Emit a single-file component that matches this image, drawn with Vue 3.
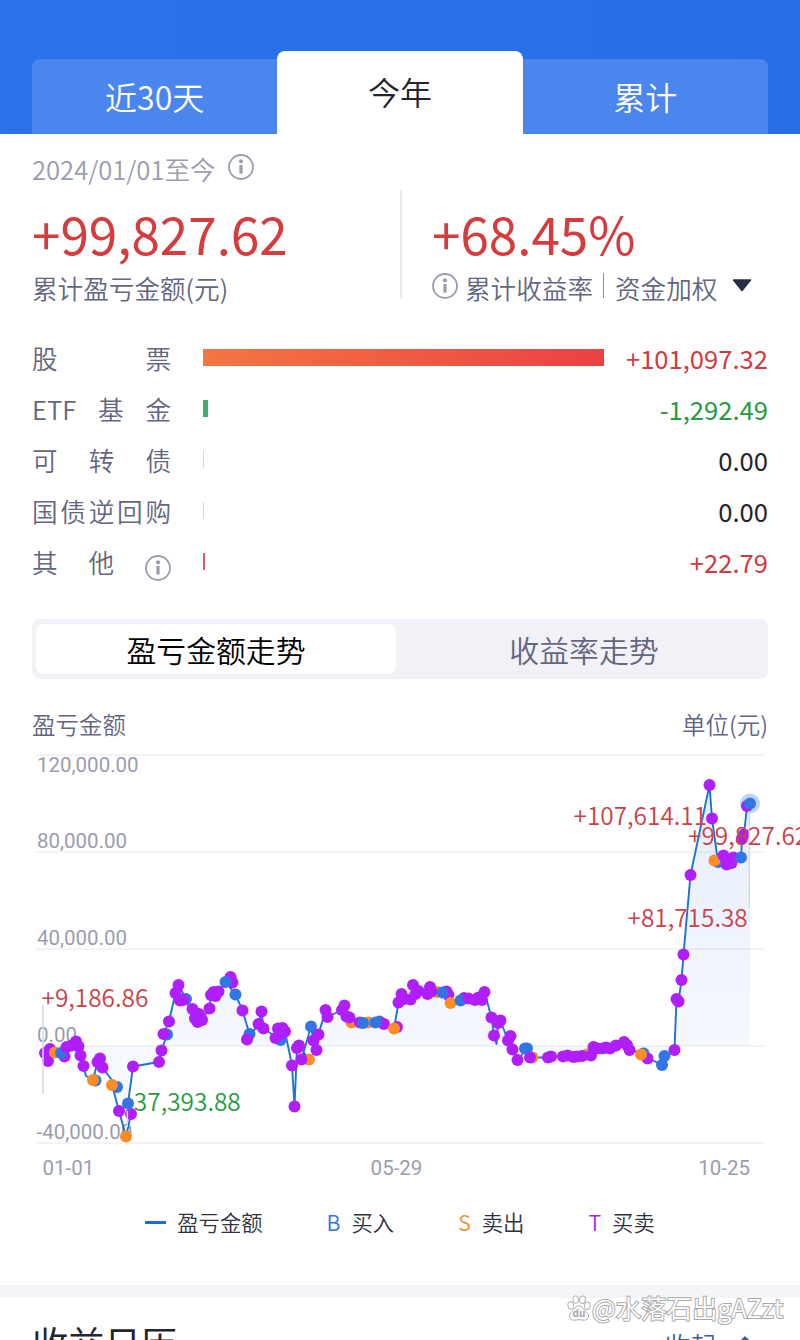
<template>
  <div class="page">
    <header class="header">
      <nav class="tabs">
        <div v-for="tab in tabs" :key="tab" class="tab" :class="{ active: tab === activeTab }">{{ tab }}</div>
      </nav>
    </header>

    <section class="summary">
      <div class="summary-col">
        <div class="date">
          <span>2024/01/01至今</span>
          <svg class="info" viewBox="0 0 26 26">
            <circle cx="13" cy="13" r="12" />
            <circle class="fill" cx="13" cy="7.3" r="2.1" />
            <path d="M13 11v8.6" />
          </svg>
        </div>
        <div class="amount">+99,827.62</div>
        <div class="caption">累计盈亏金额(元)</div>
      </div>
      <div class="divider"></div>
      <div class="summary-col right">
        <div class="amount">+68.45%</div>
        <div class="caption">
          <svg class="info" viewBox="0 0 26 26">
            <circle cx="13" cy="13" r="12" />
            <circle class="fill" cx="13" cy="7.3" r="2.1" />
            <path d="M13 11v8.6" />
          </svg>
          <span class="rate">累计收益率</span>
          <i class="sep"></i>
          <span>资金加权</span>
          <svg class="caret" viewBox="0 0 20 13"><path d="M1.5 1h17L10 11.5z" /></svg>
        </div>
      </div>
    </section>

    <section class="rows">
      <div v-for="row in rows" :key="row.value + row.label[0]" class="row">
        <div class="row-label">
          <span v-for="word in row.label" :key="word">{{ word }}</span>
          <svg v-if="row.info" class="info" viewBox="0 0 26 26">
            <circle cx="13" cy="13" r="12" />
            <circle class="fill" cx="13" cy="7.3" r="2.1" />
            <path d="M13 11v8.6" />
          </svg>
        </div>
        <div class="track">
          <div class="bar" :class="row.kind" :style="{ width: row.width + 'px' }"></div>
        </div>
        <div class="row-value" :class="row.color">{{ row.value }}</div>
      </div>
    </section>

    <div class="segment">
      <div class="segment-item on">盈亏金额走势</div>
      <div class="segment-item">收益率走势</div>
    </div>

    <div class="chart-head">
      <span>盈亏金额</span>
      <span>单位(元)</span>
    </div>

    <svg class="chart" :viewBox="`0 ${top} ${width} ${height}`">
      <defs>
        <linearGradient id="area" gradientUnits="userSpaceOnUse" x1="0" y1="785" x2="0" y2="1140">
          <stop offset="0" stop-color="#2b72e8" stop-opacity="0.12" />
          <stop offset="1" stop-color="#2b72e8" stop-opacity="0.02" />
        </linearGradient>
      </defs>

      <line v-for="t in ticks" :key="t.label" class="grid" x1="36" :y1="t.y" x2="765" :y2="t.y" />
      <polygon :points="areaPath" fill="url(#area)" />
      <text v-for="t in ticks" :key="`y-${t.label}`" class="axis" :x="t.x" :y="t.base">{{ t.label }}</text>

      <text class="mark down" x="125.5" y="1110.5">-37,393.88</text>
      <polyline class="line" :points="linePath" />

      <circle class="halo" cx="750" cy="803.5" r="10" />
      <circle v-for="(p, i) in dots" :key="i" :class="p[2]" :cx="p[0]" :cy="p[1]" r="6" />

      <line class="pin" x1="43" y1="1005" x2="43" y2="1094" />
      <line class="pin" x1="127.3" y1="1111" x2="127.3" y2="1127" />
      <line class="pin" x1="749.3" y1="811" x2="749.3" y2="908" />

      <text class="mark up" x="41.5" y="1006.5">+9,186.86</text>
      <text class="mark up" x="573.5" y="824.5">+107,614.11</text>
      <text class="mark up" x="688" y="844.5">+99,827.62</text>
      <text class="mark up" x="627.5" y="926.5">+81,715.38</text>

      <text class="axis" x="42.5" y="1174.5">01-01</text>
      <text class="axis" x="396.5" y="1174.5" text-anchor="middle">05-29</text>
      <text class="axis" x="750" y="1174.5" text-anchor="end">10-25</text>
    </svg>

    <div class="legend">
      <div class="legend-item"><i class="dash"></i>盈亏金额</div>
      <div class="legend-item"><b class="buy">B</b>买入</div>
      <div class="legend-item"><b class="sell">S</b>卖出</div>
      <div class="legend-item"><b class="both">T</b>买卖</div>
    </div>

    <div class="gap"></div>

    <section class="calendar">
      <h2>收益日历</h2>
      <div class="fold">
        收起
        <svg viewBox="0 0 20 12"><path d="M4 9l6-6 6 6" /></svg>
      </div>
    </section>

    <div class="watermark">
      <svg viewBox="0 0 24 26">
        <ellipse cx="3.8" cy="10.5" rx="2.8" ry="3.7" transform="rotate(-14 3.8 10.5)" />
        <ellipse cx="8.8" cy="4.6" rx="2.9" ry="3.8" />
        <ellipse cx="15.5" cy="4.7" rx="2.9" ry="3.8" transform="rotate(10 15.5 4.7)" />
        <ellipse cx="20.3" cy="10.8" rx="2.8" ry="3.7" transform="rotate(12 20.3 10.8)" />
        <path d="M12 10.6c-2.5 0-3.7 2.5-5.3 4.3-1.8 2-4.2 3.2-4.2 6.1 0 2.7 1.9 4.2 4.4 4.2 1.9 0 3.3-.5 5.1-.5s3.2.5 5.1.5c2.5 0 4.4-1.5 4.4-4.2 0-2.9-2.4-4.1-4.2-6.1-1.6-1.8-2.8-4.3-5.3-4.3z" />
        <text x="12" y="22.3" text-anchor="middle">du</text>
      </svg>
      <span>@水落石出gAZzt</span>
    </div>
  </div>
</template>

<script setup>
import { computed } from 'vue';

const tabs = ['近30天', '今年', '累计'];
const activeTab = '今年';

const rows = [
  { label: ['股', '票'], value: '+101,097.32', color: 'up', kind: 'profit', width: 401 },
  { label: ['ETF', '基', '金'], value: '-1,292.49', color: 'down', kind: 'loss', width: 5 },
  { label: ['可', '转', '债'], value: '0.00', color: '', kind: 'none', width: 1 },
  { label: ['国', '债', '逆', '回', '购'], value: '0.00', color: '', kind: 'none', width: 1 },
  { label: ['其', '他'], value: '+22.79', color: 'up', kind: 'tiny', width: 1.5, info: true }
];

const width = 800;
const height = 440;
const top = 750;
const zeroY = 1046;

const ticks = [
  { label: '120,000.00', y: 755, base: 771.5, x: 37 },
  { label: '80,000.00', y: 852, base: 847.5, x: 37 },
  { label: '40,000.00', y: 949, base: 945, x: 37 },
  { label: '0.00', y: 1046, base: 1042, x: 37 },
  { label: '-40,000.00', y: 1143, base: 1139, x: 36.5 }
];

// B = 买入, S = 卖出, T = 买卖, '' = 当天无交易
const points = [
  [45, 1053, 'T'], [48, 1061, 'T'], [50, 1049, 'T'], [55, 1052.5, 'S'], [64.5, 1056.5, 'T'], [61, 1053, 'B'],
  [66.5, 1047, 'T'], [71.5, 1045.5, 'T'], [76, 1041.5, 'T'], [78.5, 1046.5, 'T'], [80.5, 1055.5, 'T'],
  [83.5, 1066, 'T'], [86, 1076, ''], [95.5, 1080.5, 'B'], [93, 1080, 'S'], [97.5, 1062, 'T'], [100, 1058.5, 'T'],
  [102.5, 1067.5, 'T'], [117, 1087, 'B'], [112, 1085, 'S'], [119, 1111, 'T'], [126, 1136.5, 'S'],
  [131, 1114, 'T'], [128, 1103.5, 'B'], [133, 1066.5, 'T'], [159, 1062, 'T'], [161.5, 1050.5, 'T'],
  [167, 1034.5, 'B'], [163.5, 1034, 'T'], [169, 1021.5, 'T'], [175.5, 993, 'T'], [178.5, 985, 'T'],
  [186, 999, 'B'], [180, 1000.5, 'T'], [183, 1000, 'T'], [192.5, 1009, 'T'], [195, 1018.5, 'T'],
  [197.5, 1022, 'T'], [199, 1014, 'T'], [202, 1020, 'T'], [209.5, 1008.5, 'T'], [211, 995, 'T'],
  [213.5, 992, 'T'], [215.5, 996, 'T'], [218.5, 991.5, 'T'], [230.5, 977, 'T'], [232.5, 982.5, 'T'],
  [225.5, 982, 'B'], [235.5, 994.5, 'B'], [242.5, 1010.5, 'T'], [249.5, 1034, 'B'], [247, 1039.5, 'T'],
  [258.5, 1024, 'T'], [261.5, 1011.5, 'T'], [263.5, 1028.5, 'T'], [280.5, 1040, 'B'], [275.5, 1038, 'T'],
  [278, 1028.5, 'T'], [280, 1034, 'T'], [282.5, 1028, 'T'], [285, 1031.5, 'T'], [292, 1065.5, 'T'],
  [294.5, 1106.5, 'T'], [297, 1048, 'T'], [299, 1045.5, 'T'], [309, 1059.5, 'S'], [301.5, 1059.5, 'T'],
  [311, 1026.5, 'B'], [313.5, 1040.5, 'T'], [316.5, 1050, 'T'], [318.5, 1034.5, 'T'], [325.5, 1010, 'T'],
  [327.5, 1017, 'T'], [342, 1010, 'T'], [344.5, 1005.5, 'T'], [351.5, 1022.5, 'S'], [346.5, 1016.5, 'T'],
  [349.5, 1017.5, 'T'], [368, 1022.5, 'S'], [360, 1022.5, 'T'], [363, 1023, 'B'], [379.5, 1021.5, 'B'],
  [384, 1024, 'T'], [375.5, 1022.5, 'B'], [397, 1027, 'T'], [394, 1028.5, 'S'], [398.5, 1002.5, 'T'],
  [401.5, 994, 'T'], [404, 999, 'T'], [410.5, 999.5, 'T'], [413, 985, 'T'], [415.5, 994, 'T'],
  [418.5, 991, 'T'], [437, 992, 'S'], [427.5, 994, 'T'], [430, 987, 'T'], [431.5, 991.5, 'T'],
  [446.5, 991.5, 'T'], [448.5, 995, 'T'], [442.5, 992.5, 'B'], [450.5, 1003, 'S'], [464, 998, 'T'],
  [460.5, 1000.5, 'B'], [468.5, 998.5, 'T'], [475, 1000, 'T'], [478.5, 997.5, 'T'], [482, 1000, 'T'],
  [484.5, 992, 'T'], [491.5, 1017.5, 'T'], [494, 1035.5, 'T'], [496.5, 1044, ''], [498, 1023, 'T'],
  [500.5, 1020.5, 'T'], [508, 1040.5, 'T'], [510.5, 1036, 'T'], [512.5, 1049.5, 'T'], [517.5, 1060, 'T'],
  [527, 1048.5, 'B'], [525, 1048.5, 'B'], [532.5, 1057.5, 'S'], [530, 1057.5, 'T'], [548, 1057.5, 'T'],
  [551, 1056.5, 'T'], [563, 1056.5, 'T'], [567.5, 1055.5, 'T'], [573.5, 1057, 'T'], [577, 1056.5, 'T'],
  [587, 1054.5, 'S'], [582, 1056, 'T'], [591, 1055.5, 'T'], [593.5, 1047, 'T'], [602.5, 1048.5, 'B'],
  [597.5, 1048.5, 'T'], [606, 1047.5, 'T'], [610, 1048.5, 'T'], [616, 1045.5, 'T'], [624, 1042, 'T'],
  [627, 1045, 'T'], [629.5, 1050, 'T'], [643.5, 1053.5, 'B'], [647.5, 1058.5, 'T'], [641, 1054.5, 'S'],
  [662, 1065, 'B'], [664.5, 1056, 'B'], [674.5, 1050, 'T'], [676.5, 999, 'T'], [678.5, 1001.5, 'T'],
  [681.5, 980, 'T'], [683.5, 954.5, 'T'], [690.5, 875, 'T'], [709.5, 785, 'T'], [712, 818.5, 'T'],
  [718, 862, 'B'], [714.5, 860.5, 'S'], [723.5, 855.5, 'T'], [726.5, 864.5, 'T'], [729, 860, 'T'],
  [731.5, 863, 'T'], [733.5, 857.5, 'T'], [741, 857.5, 'B'], [742, 838.5, 'T'], [744, 834.5, 'T'],
  [747, 806, 'T'], [750, 803.5, 'B']
];

const dots = computed(() => points.filter((p) => p[2]));

const linePath = computed(() => points.map((p) => `${p[0]},${p[1]}`).join(' '));

const areaPath = computed(() => `45,${zeroY} ${linePath.value} 750,${zeroY}`);
</script>

<style>
body {
  margin: 0;
  background: #fff;
}
</style>

<style scoped>
.page {
  position: relative;
  width: 800px;
  height: 1340px;
  overflow: hidden;
  background: #fff;
  color: #626680;
  font-family: "Noto Sans CJK SC", sans-serif;
  font-size: 25.6px;
  font-weight: 350;
  line-height: 38px;
  white-space: nowrap;
}

.header {
  display: flex;
  align-items: flex-end;
  height: 134px;
  padding: 0 32px;
  box-sizing: border-box;
  background: linear-gradient(90deg, #2b73eb, #286de5);
}

.tabs {
  display: flex;
  align-items: flex-end;
  flex: 1;
}

.tab {
  flex: 1;
  height: 75px;
  line-height: 74px;
  text-align: center;
  font-size: 32px;
  color: #fff;
  background: #4a86ed;
}
.tab:first-child {
  border-top-left-radius: 8px;
}
.tab:last-child {
  border-top-right-radius: 8px;
}
.tab.active {
  height: 83px;
  line-height: 81px;
  color: #22242f;
  background: #fff;
  border-radius: 8px 8px 0 0;
}

.info {
  width: 26px;
  height: 26px;
  flex: none;
  fill: none;
  stroke: #999daf;
  stroke-width: 1.8;
}
.info path {
  stroke-width: 3.2;
}
.info .fill {
  fill: #999daf;
  stroke: none;
}

.summary {
  display: flex;
  height: 199px;
  padding: 0 32px;
}
.summary-col {
  width: 368px;
  padding-top: 16px;
}
.summary-col.right {
  width: 336px;
  padding: 54px 0 0 30px;
}
.date {
  display: flex;
  height: 38px;
  color: #999daf;
}
.date .info {
  margin: 4px 0 0 12px;
}
.amount {
  height: 80px;
  line-height: 91px;
  font-size: 51.2px;
  font-weight: 400;
  color: #d63b3d;
}
.caption {
  display: flex;
  align-items: center;
  height: 39px;
}
.divider {
  width: 2px;
  height: 109px;
  margin-top: 56px;
  background: #ebebef;
}
.caption .info {
  margin: -4px 7px 0 0;
}
.sep {
  width: 1px;
  height: 25px;
  margin: -4px 11px 0 10px;
  background: #8c8fa3;
}
.caret {
  width: 20px;
  height: 13px;
  margin: -4px 0 0 15px;
  fill: #292e47;
  stroke: #292e47;
  stroke-width: 1.5;
  stroke-linejoin: round;
}

.rows {
  height: 286px;
  padding: 0 32px;
}
.row {
  display: flex;
  height: 51px;
  line-height: 49px;
}
.row-label {
  display: flex;
  justify-content: space-between;
  width: 139px;
}
.row-label .info {
  margin: 18px 0 0;
}
.track {
  flex: 1;
  padding: 16px 0 0 32px;
}
.bar {
  height: 17px;
}
.bar.profit {
  background: linear-gradient(90deg, #f37642, #ec4143);
}
.bar.loss {
  background: #3fae6a;
}
.bar.none {
  background: #d5d6dc;
}
.bar.tiny {
  background: #d9605c;
}
.row-value {
  font-weight: 400;
  color: #22242f;
}
.row-value.up {
  color: #cf3b3e;
}
.row-value.down {
  color: #259b42;
}

.segment {
  display: flex;
  height: 60px;
  margin: 0 32px;
  padding: 5px 4px;
  box-sizing: border-box;
  border-radius: 8px;
  background: #f2f1f8;
}
.segment-item {
  flex: none;
  width: 376px;
  border-radius: 8px;
  line-height: 50px;
  text-align: center;
  font-size: 29.87px;
}
.segment-item.on {
  width: 360px;
  background: #fff;
  color: #000;
}

.chart-head {
  display: flex;
  justify-content: space-between;
  height: 71px;
  padding: 0 32px;
  line-height: 91px;
  font-size: 23.47px;
}

.chart {
  display: block;
  width: 800px;
  height: 440px;
}
.grid {
  stroke: #efeff2;
  stroke-width: 1.5;
}
.axis {
  font-family: Roboto, sans-serif;
  font-size: 20.5px;
  font-weight: 400;
  fill: #999daf;
}
.line {
  fill: none;
  stroke: #1a75d1;
  stroke-width: 1.9;
  stroke-linejoin: round;
}
.pin {
  stroke: #d8d8de;
  stroke-width: 1.5;
}
.halo {
  fill: #2b72e8;
  opacity: 0.3;
}
.B {
  fill: #3176e4;
}
.S {
  fill: #fb8c26;
}
.T {
  fill: #b01efa;
}
.mark {
  font-size: 24.4px;
}
.mark.up {
  fill: #cb4147;
}
.mark.down {
  fill: #259b42;
}

.legend {
  display: flex;
  justify-content: center;
  gap: 64px;
  height: 95px;
  line-height: 63px;
  font-size: 21.33px;
  color: #30333f;
}
.legend-item {
  display: flex;
}
.legend-item b {
  margin-right: 11px;
  font-weight: 350;
}
.dash {
  width: 21px;
  height: 3px;
  margin: 31px 11px 0 0;
  background: #1a6dd0;
}
.buy {
  color: #3176e4;
}
.sell {
  color: #ee9035;
}
.both {
  color: #a62be0;
}

.gap {
  height: 13px;
  background: #f4f4f9;
}

.calendar {
  display: flex;
  justify-content: space-between;
  padding: 0 45px 0 32px;
}
.calendar h2 {
  margin: 17px 0 0;
  font-size: 36.27px;
  font-weight: 400;
  line-height: 54px;
  color: #22242f;
}
.fold {
  display: flex;
  padding-top: 28px;
  color: #34619e;
}
.fold svg {
  width: 20px;
  height: 12px;
  margin: 9px 0 0 19px;
  fill: none;
  stroke: #34619e;
  stroke-width: 3;
}

.watermark {
  position: absolute;
  left: 567px;
  top: 1290px;
  display: flex;
  align-items: center;
  font-size: 25.4px;
  color: #fff;
}
.watermark span {
  margin-top: -2px;
  -webkit-text-stroke: 2px #a9a9ad;
  paint-order: stroke fill;
}
.watermark svg {
  width: 24px;
  height: 26px;
  margin-right: 1px;
  overflow: visible;
  fill: #fff;
  stroke: #b2b2b6;
  stroke-width: 1;
}
.watermark text {
  font-size: 10px;
  font-weight: 700;
  fill: #a4a4a8;
  stroke: none;
}
</style>
